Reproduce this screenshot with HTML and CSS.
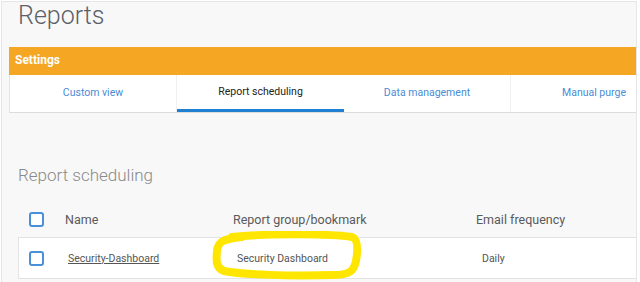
FILE: index.html
```html
<!DOCTYPE html>
<html lang="en">
  <head>
    <meta charset="UTF-8" />
    <title>Reports</title>
    <link rel="stylesheet" href="styles.css">
  </head>
  <body>
    <div class="page">
      <h1 class="title">Reports</h1>

      <div class="settings">
        <div class="settings-bar">Settings</div>
        <div class="tabs">
          <div class="tab">Custom view</div>
          <div class="tab active">Report scheduling</div>
          <div class="tab">Data management</div>
          <div class="tab">Manual purge</div>
        </div>
      </div>

      <h2 class="section-title">Report scheduling</h2>

      <div class="table">
        <div class="row head">
          <div class="cell check"><span class="checkbox"></span></div>
          <div class="cell name">Name</div>
          <div class="cell group">Report group/bookmark</div>
          <div class="cell freq">Email frequency</div>
        </div>
        <div class="row body-row">
          <div class="cell check"><span class="checkbox"></span></div>
          <div class="cell name"><a href="#">Security-Dashboard</a></div>
          <div class="cell group">
            Security Dashboard
            <!-- yellow marker drawn over the cell -->
            <svg class="marker" width="150" height="50" viewBox="0 0 150 50">
              <path d="M20 6 C60 2 120 3 140 6 C146 8 146 18 144 30 C142 40 138 44 120 44 C80 45 30 44 12 40 C4 37 4 30 5 20 C6 11 10 8 30 6"
                    fill="none" stroke="#ffe600" stroke-width="8" stroke-linecap="round" stroke-linejoin="round" />
            </svg>
          </div>
          <div class="cell freq">Daily</div>
        </div>
      </div>
    </div>
  </body>
</html>
```

FILE: styles.css
```css
body {
  margin: 0;
  background: #fff;
  font-family: Roboto, "Liberation Sans", sans-serif;
  color: #555;
}

.page {
  margin: 1px 3px 0 1px;
  height: 281px;
  border: 1px solid #e6e6e6;
  border-bottom: none;
  background: #f8f8f8;
  overflow: hidden;
}

.title {
  margin: 0;
  padding: 0 0 0 16px;
  height: 45px;
  font-size: 25px;
  font-weight: 300;
  line-height: 28px;
  color: #5b6168;
}

.settings {
  margin-left: 7px;
  width: 700px;
}

.settings-bar {
  background: #f5a623;
  color: #fff;
  font-size: 12px;
  font-weight: 700;
  height: 28px;
  line-height: 26px;
  padding-left: 6px;
}

.tabs {
  display: flex;
  background: #fff;
  border-left: 1px solid #e3e3e3;
  border-bottom: 1px solid #dcdcdc;
  height: 37px;
}

.tab {
  width: 167px;
  flex: none;
  box-sizing: border-box;
  border-right: 1px solid #f0f0f0;
  text-align: center;
  font-size: 10.5px;
  line-height: 36px;
  color: #4a8bd6;
}

.tab.active {
  color: #222;
  border-bottom: 3px solid #1f7fd1;
  border-right: none;
  line-height: 34px;
}

.section-title {
  margin: 52px 0 0 16px;
  font-size: 17px;
  font-weight: 300;
  color: #8a8a8a;
  line-height: 20px;
  height: 37px;
}

.table {
  margin-left: 16px;
  width: 700px;
}

.row {
  display: flex;
  align-items: center;
}

.row.head {
  height: 35px;
  font-size: 12.5px;
  color: #5a5a5a;
}

.row.body-row {
  height: 40px;
  background: #fff;
  border-top: 1px solid #e3e3e3;
  border-bottom: 1px solid #e3e3e3;
  border-left: 1px solid #e3e3e3;
  font-size: 10.5px;
  color: #555;
}

.cell.check {
  width: 45px;
  padding-left: 11px;
  box-sizing: border-box;
  display: flex;
}

.body-row .cell.check {
  padding-left: 10px;
}

.checkbox {
  width: 11px;
  height: 11px;
  border: 2px solid #4a90d9;
  border-radius: 3px;
  background: #fff;
}

.cell.name {
  width: 168px;
  padding-left: 2px;
}

.body-row .cell.name {
  width: 168px;
  padding-left: 4px;
}

.body-row .cell.name a {
  color: #555;
  text-decoration: underline;
}

.cell.group {
  width: 243px;
  position: relative;
}

.body-row .cell.group {
  padding-left: 1px;
  width: 242px;
}

.marker {
  position: absolute;
  left: -24px;
  top: -21px;
}

.body-row .cell.freq {
  padding-left: 3px;
}
```
